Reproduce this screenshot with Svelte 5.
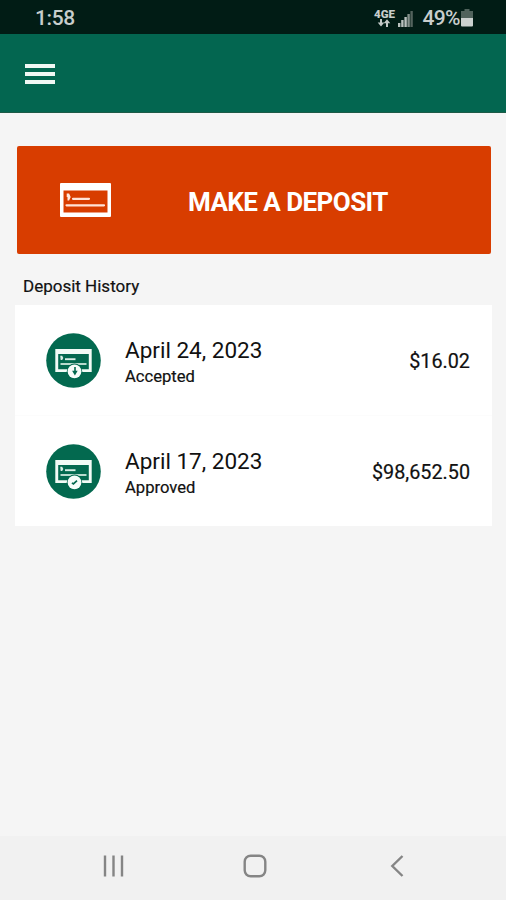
<script lang="ts">
	type Deposit = {
		date: string;
		status: 'Accepted' | 'Approved';
		amount: string;
	};

	const deposits: Deposit[] = [
		{ date: 'April 24, 2023', status: 'Accepted', amount: '$16.02' },
		{ date: 'April 17, 2023', status: 'Approved', amount: '$98,652.50' }
	];
</script>

<div class="screen">
	<div class="status-bar">
		<span class="clock">1:58</span>
		<div class="indicators">
			<div class="network">
				<span>4GE</span>
				<svg width="14" height="8" viewBox="0 0 14 8">
					<path d="M4 0v5M10 8V3" stroke="#c3c9c7" stroke-width="2" />
					<path d="M.7 3.5h6.6L4 7.5zM6.7 4.2h6.6L10 .2z" fill="#c3c9c7" />
				</svg>
			</div>
			<svg class="signal" width="16" height="17" viewBox="0 0 16 17">
				<path d="M0 13h2.4v4H0zM3.2 10h2.4v7H3.2zM6.4 7h2.4v10H6.4z" fill="#b9c1be" />
				<path d="M9.4 4h2.4v13H9.4z" fill="#84908b" />
				<path d="M12.4 1h2.4v16h-2.4z" fill="#53635d" />
			</svg>
			<span class="percent">49%</span>
			<svg class="battery" width="12" height="18" viewBox="0 0 12 18">
				<path d="M3.5 0h5v2H12v7H0V2h3.5z" fill="#50635c" />
				<path d="M0 9h12v7.5q0 1-1 1H1q-1 0-1-1z" fill="#cbd1cf" />
			</svg>
		</div>
	</div>

	<header>
		<button class="menu" aria-label="Menu">
			<i></i>
			<i></i>
			<i></i>
		</button>
	</header>

	<main>
		<button class="deposit">
			<svg width="51" height="34" viewBox="0 0 51 34">
				<path d="M1 0h49q1 0 1 1v32q0 1-1 1H1q-1 0-1-1V1q0-1 1-1zM3.5 7.5v22h44v-22z" fill="#fff" fill-rule="evenodd" />
				<path d="M6.7 10.5h2.4l1.6 3.5-1.6 3.5H7.5V14h-.8z" fill="#ffe9df" />
				<path d="M13 15.8h16M6.5 22.3h37.5" stroke="#ffe3d8" stroke-width="2.2" stroke-linecap="round" />
			</svg>
			<span>MAKE A DEPOSIT</span>
		</button>

		<h2>Deposit History</h2>

		<ul>
			{#each deposits as deposit}
				<li>
					<svg class="badge" width="55" height="55" viewBox="0 0 55 55">
						<circle cx="27.5" cy="27.5" r="27.3" fill="#03694f" />
						<path d="M9.3 16h36.4v23H9.3zM12.2 21v15.2h30.6V21z" fill="#f2fbf6" fill-rule="evenodd" />
						<path d="M14.2 22.7h2l1.1 2.2-1.1 2.2h-1.5z" fill="#d9eee5" />
						<path d="M19 26.2h10.5" stroke="#d9eee5" stroke-width="1.9" />
						<path d="M14.5 31h26" stroke="#b9dacd" stroke-width="2" />
						<circle cx="28.5" cy="38.3" r="7.7" fill="#03694f" />
						<circle cx="28.5" cy="38.3" r="6.9" fill="#f7fdfa" />
						{#if deposit.status === 'Accepted'}
							<path d="M28.2 34h1.6v3.8h1.9l-2.8 4.6-2.8-4.6h2.1z" fill="#03694f" />
						{:else}
							<path d="m25.9 38.9 1.5 1 3.6-3.2" fill="none" stroke="#03694f" stroke-width="1.7" />
						{/if}
					</svg>
					<div class="details">
						<span class="date">{deposit.date}</span>
						<span class="status">{deposit.status}</span>
					</div>
					<span class="amount">{deposit.amount}</span>
				</li>
			{/each}
		</ul>
	</main>

	<nav>
		<svg width="22" height="22" viewBox="0 0 22 22">
			<path d="M2 .5v21M10.5 .5v21M19 .5v21" stroke="#858585" stroke-width="2.4" />
		</svg>
		<svg class="home" width="24" height="24" viewBox="0 0 24 24">
			<rect x="1.7" y="1.7" width="20.6" height="20.6" rx="6" fill="none" stroke="#858585" stroke-width="2.4" />
		</svg>
		<svg width="14" height="22" viewBox="0 0 14 22">
			<path d="M12.5 1 2.3 11l10.2 10" fill="none" stroke="#858585" stroke-width="2.4" />
		</svg>
	</nav>
</div>

<style>
	:global(body) {
		margin: 0;
		background: #f5f5f5;
	}

	.screen {
		display: flex;
		flex-direction: column;
		height: 900px;
		font-family: Roboto, 'Liberation Sans', sans-serif;
		color: #111;
		background: #f5f5f5;
	}

	svg {
		display: block;
		flex: none;
	}

	button {
		border: 0;
		font: inherit;
	}

	.status-bar {
		display: flex;
		justify-content: space-between;
		align-items: center;
		box-sizing: border-box;
		height: 34px;
		padding: 2px 33px 0 35px;
		color: #c8cecc;
		background: #011c15;
	}

	.clock,
	.percent {
		font-size: 21px;
		font-weight: 500;
		line-height: 32px;
		letter-spacing: -0.4px;
	}

	.indicators {
		display: flex;
		align-items: center;
	}

	.network {
		display: flex;
		flex-direction: column;
		align-items: center;
		width: 22px;
		margin-right: 3px;
	}

	.network span {
		font-size: 11.5px;
		font-weight: 900;
		line-height: 10px;
	}

	.percent {
		margin: 0 1px 0 8px;
		letter-spacing: -0.6px;
	}

	header {
		display: flex;
		align-items: center;
		box-sizing: border-box;
		height: 79px;
		padding-left: 25px;
		border-bottom: 1px solid #1d5a47;
		background: #036650;
	}

	.menu {
		display: flex;
		flex-direction: column;
		gap: 4px;
		padding: 0;
		margin-top: 2px;
		background: none;
	}

	.menu i {
		width: 30px;
		height: 4px;
		background: #f0f8f5;
	}

	main {
		flex: 1;
		padding: 33px 14px 0 15px;
	}

	.deposit {
		display: flex;
		align-items: center;
		width: 474px;
		height: 108px;
		margin-left: 2px;
		padding: 0 0 0 43px;
		border-radius: 2px;
		color: #fff;
		background: #d83d00;
	}

	.deposit span {
		margin: 3px 0 0 77px;
		font-size: 26px;
		font-weight: 700;
		letter-spacing: -0.55px;
		white-space: nowrap;
	}

	h2 {
		margin: 22px 0 9px 8px;
		font-size: 17px;
		font-weight: 400;
		line-height: 20px;
	}

	ul {
		margin: 0;
		padding: 0;
		list-style: none;
		background: #fff;
	}

	li {
		display: flex;
		align-items: center;
		box-sizing: border-box;
		height: 110px;
		padding: 0 22px 0 31px;
	}

	li + li {
		height: 111px;
		border-top: 1px solid #fcfcfc;
	}

	.details {
		display: flex;
		flex: 1;
		flex-direction: column;
		margin: 6px 0 0 24px;
	}

	.date {
		font-size: 22.5px;
		line-height: 27px;
	}

	.status {
		font-size: 16.6px;
		line-height: 26px;
	}

	.status,
	.amount,
	h2 {
		-webkit-text-stroke: 0.2px #111;
	}

	.amount {
		margin-top: 2px;
		font-size: 19.8px;
	}

	nav {
		display: flex;
		justify-content: space-between;
		align-items: center;
		box-sizing: border-box;
		height: 64px;
		padding: 0 102px 5px 103px;
		background: #f1f1f1;
	}

	.home {
		margin-right: 6px;
	}
</style>
